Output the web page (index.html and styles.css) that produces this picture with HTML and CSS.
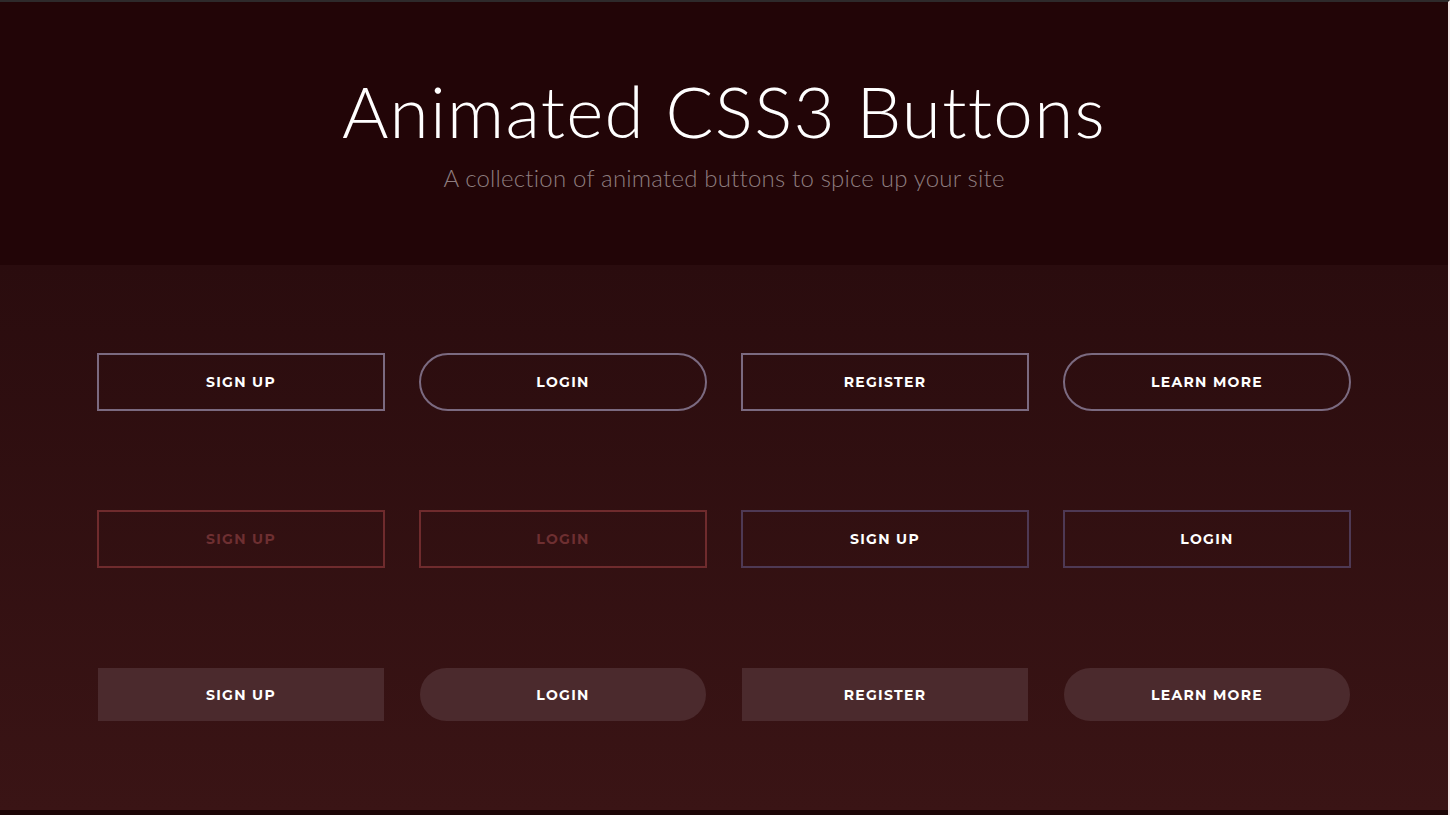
FILE: index.html
```html
<!DOCTYPE html>
<html lang="en">
<head>
<meta charset="utf-8">
<title>Animated CSS3 Buttons</title>
<link rel="stylesheet" href="styles.css">
</head>
<body>
<div class="page">
  <header class="hero">
    <h1 class="title">Animated CSS3 Buttons</h1>
    <p class="subtitle">A collection of animated buttons to spice up your site</p>
  </header>
  <main class="showcase">
    <div class="row">
      <a class="btn btn-outline">Sign up</a>
      <a class="btn btn-outline btn-pill">Login</a>
      <a class="btn btn-outline">Register</a>
      <a class="btn btn-outline btn-pill">Learn more</a>
    </div>
    <div class="row">
      <a class="btn btn-red">Sign up</a>
      <a class="btn btn-red">Login</a>
      <a class="btn btn-violet">Sign up</a>
      <a class="btn btn-violet">Login</a>
    </div>
    <div class="row">
      <a class="btn btn-fill">Sign up</a>
      <a class="btn btn-fill btn-pill">Login</a>
      <a class="btn btn-fill">Register</a>
      <a class="btn btn-fill btn-pill">Learn more</a>
    </div>
  </main>
  <div class="footer-strip"></div>
</div>
</body>
</html>
```
FILE: styles.css
```css
* { box-sizing: border-box; }
html, body { margin: 0; padding: 0; }
body {
  background: #1c0506;
  font-family: "Lato", "Open Sans", sans-serif;
  height: 815px;
  overflow: hidden;
}
.page {
  width: 1450px;
  border-top: 2px solid #2e2a2b;
  border-right: 2px solid #f3e8e8;
}
.hero {
  height: 263px;
  background: #220507;
  text-align: center;
  padding-top: 69px;
}
.title {
  margin: 0;
  font-family: "Lato", sans-serif;
  font-weight: 300;
  font-size: 71px;
  line-height: 80px;
  color: #ffffff;
  letter-spacing: 1.3px;
}
.subtitle {
  margin: 13px 0 0;
  font-family: "Lato", sans-serif;
  font-weight: 300;
  font-size: 24px;
  line-height: 28px;
  color: #8e7d7f;
  letter-spacing: 0.2px;
}
.showcase {
  height: 545px;
  background: linear-gradient(to bottom, #2a0c0e 0%, #3a1415 100%);
  padding-top: 88px;
  display: flex;
  flex-direction: column;
  gap: 99px;
}
.row {
  display: grid;
  grid-template-columns: repeat(4, 288px);
  column-gap: 34px;
  justify-content: center;
  align-items: start;
  height: 58px;
}
.btn {
  display: flex;
  align-items: center;
  justify-content: center;
  height: 58px;
  font-family: "Montserrat", "Open Sans", sans-serif;
  font-weight: 700;
  font-size: 14px;
  letter-spacing: 1.3px;
  text-transform: uppercase;
  color: #ffffff;
  text-decoration: none;
}
.btn-outline { border: 2px solid #7b6a80; }
.btn-pill { border-radius: 29px; }
.btn-red { border: 2px solid #6f2b2d; color: #6e2f31; }
.btn-violet { border: 2px solid #4e3954; }
.btn-fill {
  height: 53px;
  margin: 1px 1px 0;
  background: #4b2a2d;
}
.btn-fill.btn-pill { border-radius: 27px; }
.footer-strip { height: 5px; background: #1c0506; }
```
